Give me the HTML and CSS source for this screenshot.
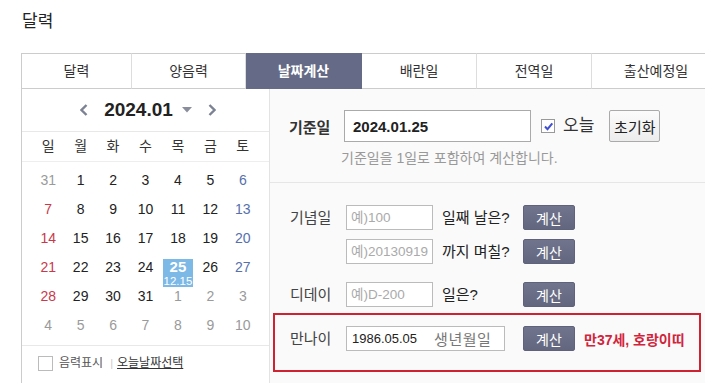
FILE: index.html
```html
<!DOCTYPE html>
<html lang="ko">
<head>
    <meta charset="UTF-8">
    <title>달력 - 날짜계산</title>
    <link rel="stylesheet" href="styles.css">
</head>
<body>
<div class="page">
    <h1 class="title">달력</h1>
    <div class="box">
        <ul class="tabs">
            <li class="tab first">달력</li>
            <li class="tab second">양음력</li>
            <li class="tab on">날짜계산</li>
            <li class="tab">배란일</li>
            <li class="tab">전역일</li>
            <li class="tab last">출산예정일</li>
        </ul>
        <div class="calc">
            <div class="cal">
                <div class="cal-head">
                    <svg class="arrow" width="8" height="12" viewBox="0 0 8 12"><polyline points="6.5,1 1.5,6 6.5,11" fill="none" stroke="#7c8194" stroke-width="2.4"/></svg>
                    <span class="month">2024.01</span>
                    <svg class="caret" width="10" height="6" viewBox="0 0 10 6"><polygon points="0,0 10,0 5,5.5" fill="#8a8d9b"/></svg>
                    <svg class="arrow" width="8" height="12" viewBox="0 0 8 12"><polyline points="1.5,1 6.5,6 1.5,11" fill="none" stroke="#7c8194" stroke-width="2.4"/></svg>
                </div>
                <div class="week">
                    <span>일</span><span>월</span><span>화</span><span>수</span><span>목</span><span>금</span><span>토</span>
                </div>
                <div class="days">
                    <span class="day off">31</span><span class="day">1</span><span class="day">2</span><span class="day">3</span><span class="day">4</span><span class="day">5</span><span class="day sat">6</span>
                    <span class="day sun">7</span><span class="day">8</span><span class="day">9</span><span class="day">10</span><span class="day">11</span><span class="day">12</span><span class="day sat">13</span>
                    <span class="day sun">14</span><span class="day">15</span><span class="day">16</span><span class="day">17</span><span class="day">18</span><span class="day">19</span><span class="day sat">20</span>
                    <span class="day sun">21</span><span class="day">22</span><span class="day">23</span><span class="day">24</span>
                    <span class="day"><span class="today-box"><b>25</b><small>12.15</small></span></span>
                    <span class="day">26</span><span class="day sat">27</span>
                    <span class="day sun">28</span><span class="day">29</span><span class="day">30</span><span class="day">31</span><span class="day off">1</span><span class="day off">2</span><span class="day off">3</span>
                    <span class="day off">4</span><span class="day off">5</span><span class="day off">6</span><span class="day off">7</span><span class="day off">8</span><span class="day off">9</span><span class="day off">10</span>
                </div>
                <div class="cal-foot">
                    <span class="chk"></span>
                    <span>음력표시</span>
                    <span class="sep">|</span>
                    <a class="link">오늘날짜선택</a>
                </div>
            </div>

            <div class="form">
                <div class="base">
                    <div class="row">
                        <span class="base-lbl">기준일</span>
                        <input class="base-input" type="text" value="2024.01.25">
                        <span class="check">
                            <svg width="11" height="11" viewBox="0 0 11 11"><polyline points="2,5.5 4.5,8.2 9.3,2.3" fill="none" stroke="#4150cf" stroke-width="2"/></svg>
                        </span>
                        <span class="today-lbl">오늘</span>
                        <button class="reset">초기화</button>
                    </div>
                    <p class="hint">기준일을 1일로 포함하여 계산합니다.</p>
                </div>

                <div class="rows">
                    <div class="line">
                        <span class="lbl">기념일</span>
                        <input class="field" type="text" placeholder="예)100">
                        <span class="q">일째 날은?</span>
                        <button class="btn">계산</button>
                    </div>
                    <div class="line">
                        <span class="lbl"></span>
                        <input class="field" type="text" placeholder="예)20130919">
                        <span class="q">까지 며칠?</span>
                        <button class="btn">계산</button>
                    </div>
                    <div class="line gap">
                        <span class="lbl">디데이</span>
                        <input class="field" type="text" placeholder="예)D-200">
                        <span class="q">일은?</span>
                        <button class="btn">계산</button>
                    </div>
                    <div class="age">
                        <div class="line">
                            <span class="lbl">만나이</span>
                            <div class="field wide">
                                <span class="val">1986.05.05</span>
                                <span class="ph">생년월일</span>
                            </div>
                            <button class="btn push">계산</button>
                            <span class="result">만37세, 호랑이띠</span>
                        </div>
                    </div>
                </div>
            </div>
        </div>
    </div>
</div>
</body>
</html>
```

FILE: styles.css
```css
body {
    margin: 0;
    font-family: "Liberation Sans", "Noto Sans CJK KR", sans-serif;
    color: #222;
    background: #fff;
    overflow: hidden;
}
.page {
    padding: 11px 0 0 21px;
}
.title {
    margin: 0 0 20px 1px;
    font-size: 17px;
    line-height: 22px;
    font-weight: normal;
    color: #222;
}
.box {
    width: 700px;
}

/* tabs */
.tabs {
    display: flex;
    list-style: none;
    margin: 0;
    padding: 0;
}
.tab {
    box-sizing: border-box;
    width: 115px;
    height: 36px;
    border-top: 1px solid #ccc;
    border-bottom: 1px solid #ccc;
    border-right: 1px solid #ddd;
    text-align: center;
    font-size: 14px;
    line-height: 34px;
    color: #333;
}
.tab.first {
    width: 111px;
    border-left: 1px solid #ccc;
}
.tab.second {
    width: 114px;
}
.tab.on {
    width: 116px;
    background: #656a86;
    border-color: #656a86;
    color: #fff;
    font-weight: bold;
}
.tab.last {
    flex: 1;
}

.calc {
    display: flex;
}

/* calendar */
.cal {
    box-sizing: border-box;
    width: 249px;
    border-left: 1px solid #ccc;
    border-right: 1px solid #e3e3e3;
}
.cal-head {
    height: 42px;
    border-bottom: 1px solid #e8e8e8;
    display: flex;
    align-items: center;
    justify-content: center;
    padding-left: 5px;
}
.month {
    font-size: 19px;
    line-height: 22px;
    font-weight: bold;
    color: #222;
    margin: 0 9px 0 16px;
}
.caret {
    margin-right: 16px;
}
.week {
    display: grid;
    grid-template-columns: repeat(7, 1fr);
    padding: 0 10px;
    height: 29px;
    line-height: 29px;
    border-bottom: 1px solid #eee;
    font-size: 14px;
    text-align: center;
    color: #333;
}
.days {
    display: grid;
    grid-template-columns: repeat(7, 1fr);
    grid-auto-rows: 29px;
    padding: 4px 10px 5px;
}
.day {
    display: flex;
    flex-direction: column;
    align-items: center;
    padding-top: 6px;
    font-size: 14px;
    line-height: 16px;
    color: #222;
}
.day.sun {
    color: #c9394a;
}
.day.sat {
    color: #5670ad;
}
.day.off {
    color: #9a9a9a;
}
.today-box {
    width: 30px;
    height: 28px;
    background: #7cb9e6;
    color: #fff;
    display: flex;
    flex-direction: column;
    align-items: center;
}
.today-box b {
    font-size: 15px;
    line-height: 16px;
}
.today-box small {
    font-size: 11.5px;
    line-height: 12px;
}
.cal-foot {
    border-top: 1px solid #e8e8e8;
    display: flex;
    height: 40px;
    padding: 10px 0 0 16px;
    align-items: flex-start;
    font-size: 12px;
    line-height: 15px;
    color: #555;
}
.chk {
    box-sizing: border-box;
    width: 15px;
    height: 15px;
    border: 1px solid #bbb;
    background: #fff;
    margin-right: 6px;
}
.sep {
    color: #ccc;
    margin: 0 4px 0 7px;
    font-size: 11px;
}
.link {
    color: #333;
    text-decoration: underline;
}

/* date calculator */
.form {
    flex: 1;
    background: #fafafa;
    border-bottom: 1px solid #ddd;
}
.base {
    box-sizing: border-box;
    height: 94px;
    border-bottom: 1px solid #e6e6e6;
    padding: 21px 0 0 19px;
}
.row {
    display: flex;
    align-items: center;
}
.base-lbl {
    width: 55px;
    font-size: 15px;
    font-weight: bold;
    color: #333;
}
.base-input {
    box-sizing: border-box;
    width: 187px;
    height: 32px;
    border: 1px solid #aaa;
    padding: 0 8px;
    font-family: "Liberation Sans", sans-serif;
    font-size: 15px;
    font-weight: bold;
    color: #222;
    background: #fff;
}
.check {
    box-sizing: border-box;
    width: 14px;
    height: 14px;
    margin-left: 10px;
    border: 1px solid #999;
    background: #fff;
    display: flex;
    align-items: center;
    justify-content: center;
}
.today-lbl {
    margin-left: 8px;
    font-size: 17px;
    line-height: 20px;
    color: #333;
}
.reset {
    box-sizing: border-box;
    margin-left: 15px;
    width: 51px;
    height: 32px;
    padding: 0;
    border: 1px solid #aaa;
    border-radius: 2px;
    background: linear-gradient(#fbfbfb, #ececec);
    font-family: "Liberation Sans", "Noto Sans CJK KR", sans-serif;
    font-size: 15px;
    color: #222;
}
.hint {
    margin: 8px 0 0 52px;
    font-size: 14px;
    line-height: 16px;
    color: #999;
}

.rows {
    padding-top: 22px;
}
.line {
    display: flex;
    align-items: center;
    height: 25px;
    padding-left: 20px;
    margin-bottom: 9px;
}
.line.gap {
    margin-top: 18px;
    margin-bottom: 6px;
}
.lbl {
    width: 56px;
    font-size: 15px;
    line-height: 18px;
    color: #444;
}
.field {
    box-sizing: border-box;
    width: 87px;
    height: 25px;
    border: 1px solid #bbb;
    background: #fff;
    padding: 0 3px 0 4px;
    font-family: "Liberation Sans", "Noto Sans CJK KR", sans-serif;
    font-size: 13.5px;
    color: #222;
}
.field::placeholder {
    color: #aaa;
}
.q {
    box-sizing: border-box;
    width: 90px;
    padding-left: 9px;
    font-size: 15px;
    line-height: 18px;
    color: #222;
}
.btn {
    box-sizing: border-box;
    width: 52px;
    height: 25px;
    padding: 0;
    border: 1px solid #5e637b;
    border-radius: 2px;
    background: linear-gradient(#70758d, #62677f);
    color: #fff;
    font-family: "Noto Sans CJK KR", sans-serif;
    font-size: 14px;
}
.age {
    box-sizing: border-box;
    width: 428px;
    height: 59px;
    margin: 0 0 7px 3px;
    border: 2px solid #cf2231;
    padding-top: 11px;
}
.age .line {
    padding-left: 15px;
    margin: 0;
}
.field.wide {
    width: 159px;
    padding: 0 5px;
    display: flex;
    align-items: center;
}
.val {
    font-size: 13px;
    color: #222;
}
.ph {
    margin-left: 17px;
    font-size: 15px;
    letter-spacing: 0.5px;
    color: #777;
}
.btn.push {
    margin-left: 18px;
}
.result {
    margin-left: 9px;
    font-size: 14px;
    font-weight: bold;
    color: #d1243a;
}
```
